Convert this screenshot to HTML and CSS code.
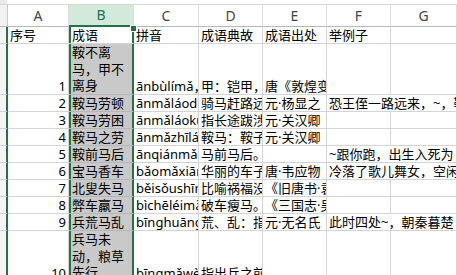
FILE: index.html
```html
<!DOCTYPE html>
<html lang="zh">
<head>
<meta charset="utf-8">
<title>成语表</title>
<link rel="stylesheet" href="styles.css">
</head>
<body>
<div class="sheet">
  <div class="topbar"><div class="tb-corner"></div><div class="tb-rest"></div></div>
  <div class="grid">
    <!-- column headers -->
    <div class="corner"></div>
    <div class="ch">A</div>
    <div class="ch ch-sel">B</div>
    <div class="ch">C</div>
    <div class="ch">D</div>
    <div class="ch">E</div>
    <div class="ch">F</div>
    <div class="ch">G</div>

    <!-- row: header -->
    <div class="rh"></div>
    <div class="c">序号</div>
    <div class="c b active">成语</div>
    <div class="c">拼音</div>
    <div class="c">成语典故</div>
    <div class="c">成语出处</div>
    <div class="c">举例子</div>
    <div class="c"></div>

    <!-- 1 -->
    <div class="rh"></div>
    <div class="c num">1</div>
    <div class="c b wrap">鞍不离<br>马，甲不<br>离身</div>
    <div class="c">ānbùlímǎ，jiǎbùlíshēn</div>
    <div class="c">甲：铠甲，离：脱离</div>
    <div class="c">唐《敦煌变文集》</div>
    <div class="c"></div>
    <div class="c"></div>

    <!-- 2 -->
    <div class="rh"></div>
    <div class="c num">2</div>
    <div class="c b">鞍马劳顿</div>
    <div class="c">ānmǎláodùn</div>
    <div class="c">骑马赶路远途</div>
    <div class="c">元·杨显之《</div>
    <div class="c over">恐王侄一路远来，~，鞍马劳顿</div>

    <!-- 3 -->
    <div class="rh"></div>
    <div class="c num">3</div>
    <div class="c b">鞍马劳困</div>
    <div class="c">ānmǎláokùn</div>
    <div class="c">指长途跋涉</div>
    <div class="c">元·关汉卿《</div>
    <div class="c"></div>
    <div class="c"></div>

    <!-- 4 -->
    <div class="rh"></div>
    <div class="c num">4</div>
    <div class="c b">鞍马之劳</div>
    <div class="c">ānmǎzhīláo</div>
    <div class="c">鞍马：鞍子</div>
    <div class="c">元·关汉卿《</div>
    <div class="c"></div>
    <div class="c"></div>

    <!-- 5 -->
    <div class="rh"></div>
    <div class="c num">5</div>
    <div class="c b">鞍前马后</div>
    <div class="c">ānqiánmǎhòu</div>
    <div class="c">马前马后。</div>
    <div class="c"></div>
    <div class="c over">~跟你跑，出生入死为</div>

    <!-- 6 -->
    <div class="rh"></div>
    <div class="c num">6</div>
    <div class="c b">宝马香车</div>
    <div class="c">bǎomǎxiāngchē</div>
    <div class="c">华丽的车子</div>
    <div class="c">唐·韦应物《</div>
    <div class="c over">冷落了歌儿舞女，空闲</div>

    <!-- 7 -->
    <div class="rh"></div>
    <div class="c num">7</div>
    <div class="c b">北叟失马</div>
    <div class="c">běisǒushīmǎ</div>
    <div class="c">比喻祸福没有</div>
    <div class="c">《旧唐书·袁</div>
    <div class="c"></div>
    <div class="c"></div>

    <!-- 8 -->
    <div class="rh"></div>
    <div class="c num">8</div>
    <div class="c b">弊车羸马</div>
    <div class="c">bìchēléimǎ</div>
    <div class="c">破车瘦马。</div>
    <div class="c">《三国志·吴</div>
    <div class="c"></div>
    <div class="c"></div>

    <!-- 9 -->
    <div class="rh"></div>
    <div class="c num">9</div>
    <div class="c b">兵荒马乱</div>
    <div class="c">bīnghuāngmǎluàn</div>
    <div class="c">荒、乱：指</div>
    <div class="c">元·无名氏《</div>
    <div class="c over">此时四处~，朝秦暮楚</div>

    <!-- 10 -->
    <div class="rh"></div>
    <div class="c num">10</div>
    <div class="c b wrap">兵马未<br>动，粮草<br>先行</div>
    <div class="c">bīngmǎwèidòng</div>
    <div class="c">指出兵之前</div>
    <div class="c"></div>
    <div class="c"></div>
    <div class="c"></div>
  </div>
</div>
</body>
</html>
```

FILE: styles.css
```css
html, body {
  margin: 0;
  padding: 0;
  background: #ffffff;
}

.sheet {
  width: 457px;
  height: 275px;
  overflow: hidden;
  font-family: "Noto Sans", "Noto Sans CJK SC", sans-serif;
  font-size: 13px;
  color: #000;
}

.topbar {
  display: flex;
  height: 5px;
  box-sizing: border-box;
  border-bottom: 1px solid #d6d6d6;
}

.tb-corner {
  width: 7px;
  background: #e9e9e9;
}

.tb-rest {
  flex: 1;
  background: #ffffff;
}

.grid {
  display: grid;
  grid-template-columns: 8px 61px 65px 65px 64px 64px 64px 66px;
  grid-template-rows: 22px 17px 51px repeat(8, 17px) 51px;
}

.grid > div {
  box-sizing: border-box;
  min-width: 0;
}

.corner {
  background: #f2f2f2;
  border-right: 1px solid #c8c8c8;
  border-bottom: 1px solid #b8b8b8;
}

.ch {
  background: #ffffff;
  color: #444;
  font-size: 14px;
  text-align: center;
  line-height: 21px;
  border-right: 1px solid #dcdcdc;
  border-bottom: 1px solid #b8b8b8;
}

.ch-sel {
  background: #d3e9dc;
  color: #217346;
  border-bottom: 2px solid #217346;
  line-height: 20px;
}

.rh {
  background: #f4f4f4;
  border-right: 2px solid #217346;
  border-bottom: 1px solid #d4d4d4;
}

.c {
  display: flex;
  align-items: flex-end;
  white-space: nowrap;
  overflow: hidden;
  padding: 0 2px 0 2px;
  line-height: 16px;
  border-right: 1px solid #d4d4d4;
  border-bottom: 1px solid #d4d4d4;
}

.num {
  justify-content: flex-end;
}

/* selected column B: gray fill, green outline on both sides */
.b {
  background: #c9c9c9;
  border-bottom-color: #b6b6b6;
  border-right-color: #217346;
  box-shadow: inset 2px 0 0 #217346, inset -1px 0 0 #217346;
  padding-left: 3px;
}

.b.active {
  background: #ffffff;
  border-bottom-color: #d4d4d4;
  position: relative;
  overflow: visible;
}

/* fill handle square on the active cell corner */
.b.active::after {
  content: "";
  position: absolute;
  right: -4px;
  top: -2px;
  width: 5px;
  height: 5px;
  background: #217346;
  border: 1px solid #ffffff;
  z-index: 2;
}

.wrap {
  white-space: normal;
  line-height: 16.6px;
}

.over {
  grid-column: span 2;
}
```
